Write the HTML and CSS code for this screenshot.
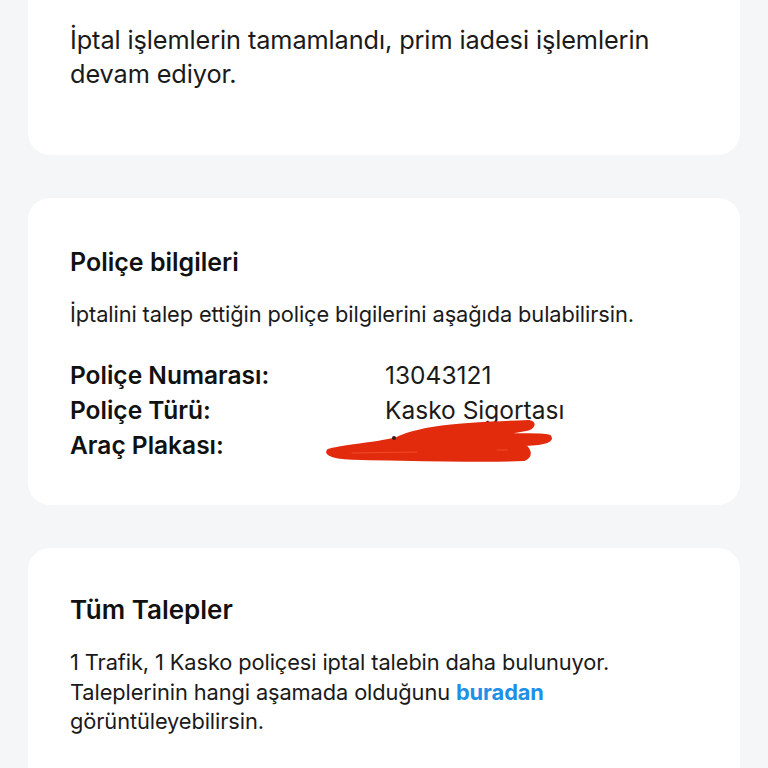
FILE: index.html
```html
<!DOCTYPE html>
<html lang="tr">
<head>
<meta charset="utf-8">
<link rel="stylesheet" href="styles.css">
</head>
<body>
<div class="page">
  <section class="card card-top">
    <p class="lead">İptal işlemlerin tamamlandı, prim iadesi işlemlerin devam ediyor.</p>
  </section>
  <section class="card card-info">
    <h2 class="title">Poliçe bilgileri</h2>
    <p class="sub">İptalini talep ettiğin poliçe bilgilerini aşağıda bulabilirsin.</p>
    <div class="rows">
      <div class="row"><span class="label">Poliçe Numarası:</span><span class="value">13043121</span></div>
      <div class="row"><span class="label">Poliçe Türü:</span><span class="value">Kasko Sigortası</span></div>
      <div class="row"><span class="label">Araç Plakası:</span><span class="value"></span></div>
    </div>
    <svg class="redact" width="240" height="50" viewBox="0 0 240 50">
      <path fill="#e22b0d" stroke="#e22b0d" stroke-width="2" stroke-linejoin="round"
        d="M6 34 C20 29 55 28 75 22 C100 9 150 7 207 5 C214 6 213 12 204 14 L182 18 C200 19 222 17 228 20 C232 25 224 28 203 29 C208 34 211 40 202 44 C160 46 100 44 40 43 C12 43 2 39 6 34 Z"/>
      <path fill="none" stroke="#f04a2c" stroke-width="1.2" stroke-linecap="round" d="M30 37 L95 36 M175 34 L185 34"/>
      <circle cx="72" cy="22" r="2" fill="#3a1a12"/>
    </svg>
  </section>
  <section class="card card-all">
    <h2 class="title">Tüm Talepler</h2>
    <p class="body"><span>1 Trafik, 1 Kasko poliçesi iptal talebin daha bulunuyor.</span> <span>Taleplerinin hangi aşamada olduğunu</span> <span class="link">buradan</span> <span>görüntüleyebilirsin.</span></p>
  </section>
</div>
</body>
</html>
```
FILE: styles.css
```css
html, body {
  margin: 0;
  padding: 0;
  background: #f5f6f8;
}
body {
  font-family: Inter, "Noto Sans", sans-serif;
  color: #1a1a1a;
  width: 768px;
  height: 768px;
  overflow: hidden;
}
.page {
  display: flex;
  flex-direction: column;
  gap: 43px;
  padding: 0 28px;
  margin-top: -40px;
}
.card {
  background: #ffffff;
  border-radius: 22px;
  padding: 0 42px;
  position: relative;
}
.card-top {
  height: 195px;
  padding-top: 63px;
  box-sizing: border-box;
}
.lead {
  margin: 0;
  font-size: 25.3px;
  line-height: 34px;
  letter-spacing: -0.1px;
}
.card-info {
  height: 307px;
  padding-top: 48px;
  box-sizing: border-box;
}
.title {
  margin: 0;
  font-size: 25px;
  line-height: 32px;
  font-weight: 600;
  color: #111;
}
.card-all .title {
  font-size: 26px;
}
.sub {
  margin: 22px 0 0;
  font-size: 21.8px;
  line-height: 28px;
  letter-spacing: -0.1px;
}
.rows {
  margin-top: 30px;
  display: flex;
  flex-direction: column;
}
.row {
  display: flex;
  font-size: 24.5px;
  line-height: 35px;
}
.label {
  width: 315px;
  font-weight: 600;
  color: #111;
}
.value {
  font-weight: 400;
}
.redact {
  position: absolute;
  left: 294px;
  top: 218px;
}
.card-all {
  height: 300px;
  padding-top: 46px;
  box-sizing: border-box;
}
.body {
  margin: 22px 0 0;
  font-size: 21.8px;
  line-height: 29.5px;
  letter-spacing: -0.1px;
}
.link {
  color: #1e90e6;
  font-weight: 700;
}
```
